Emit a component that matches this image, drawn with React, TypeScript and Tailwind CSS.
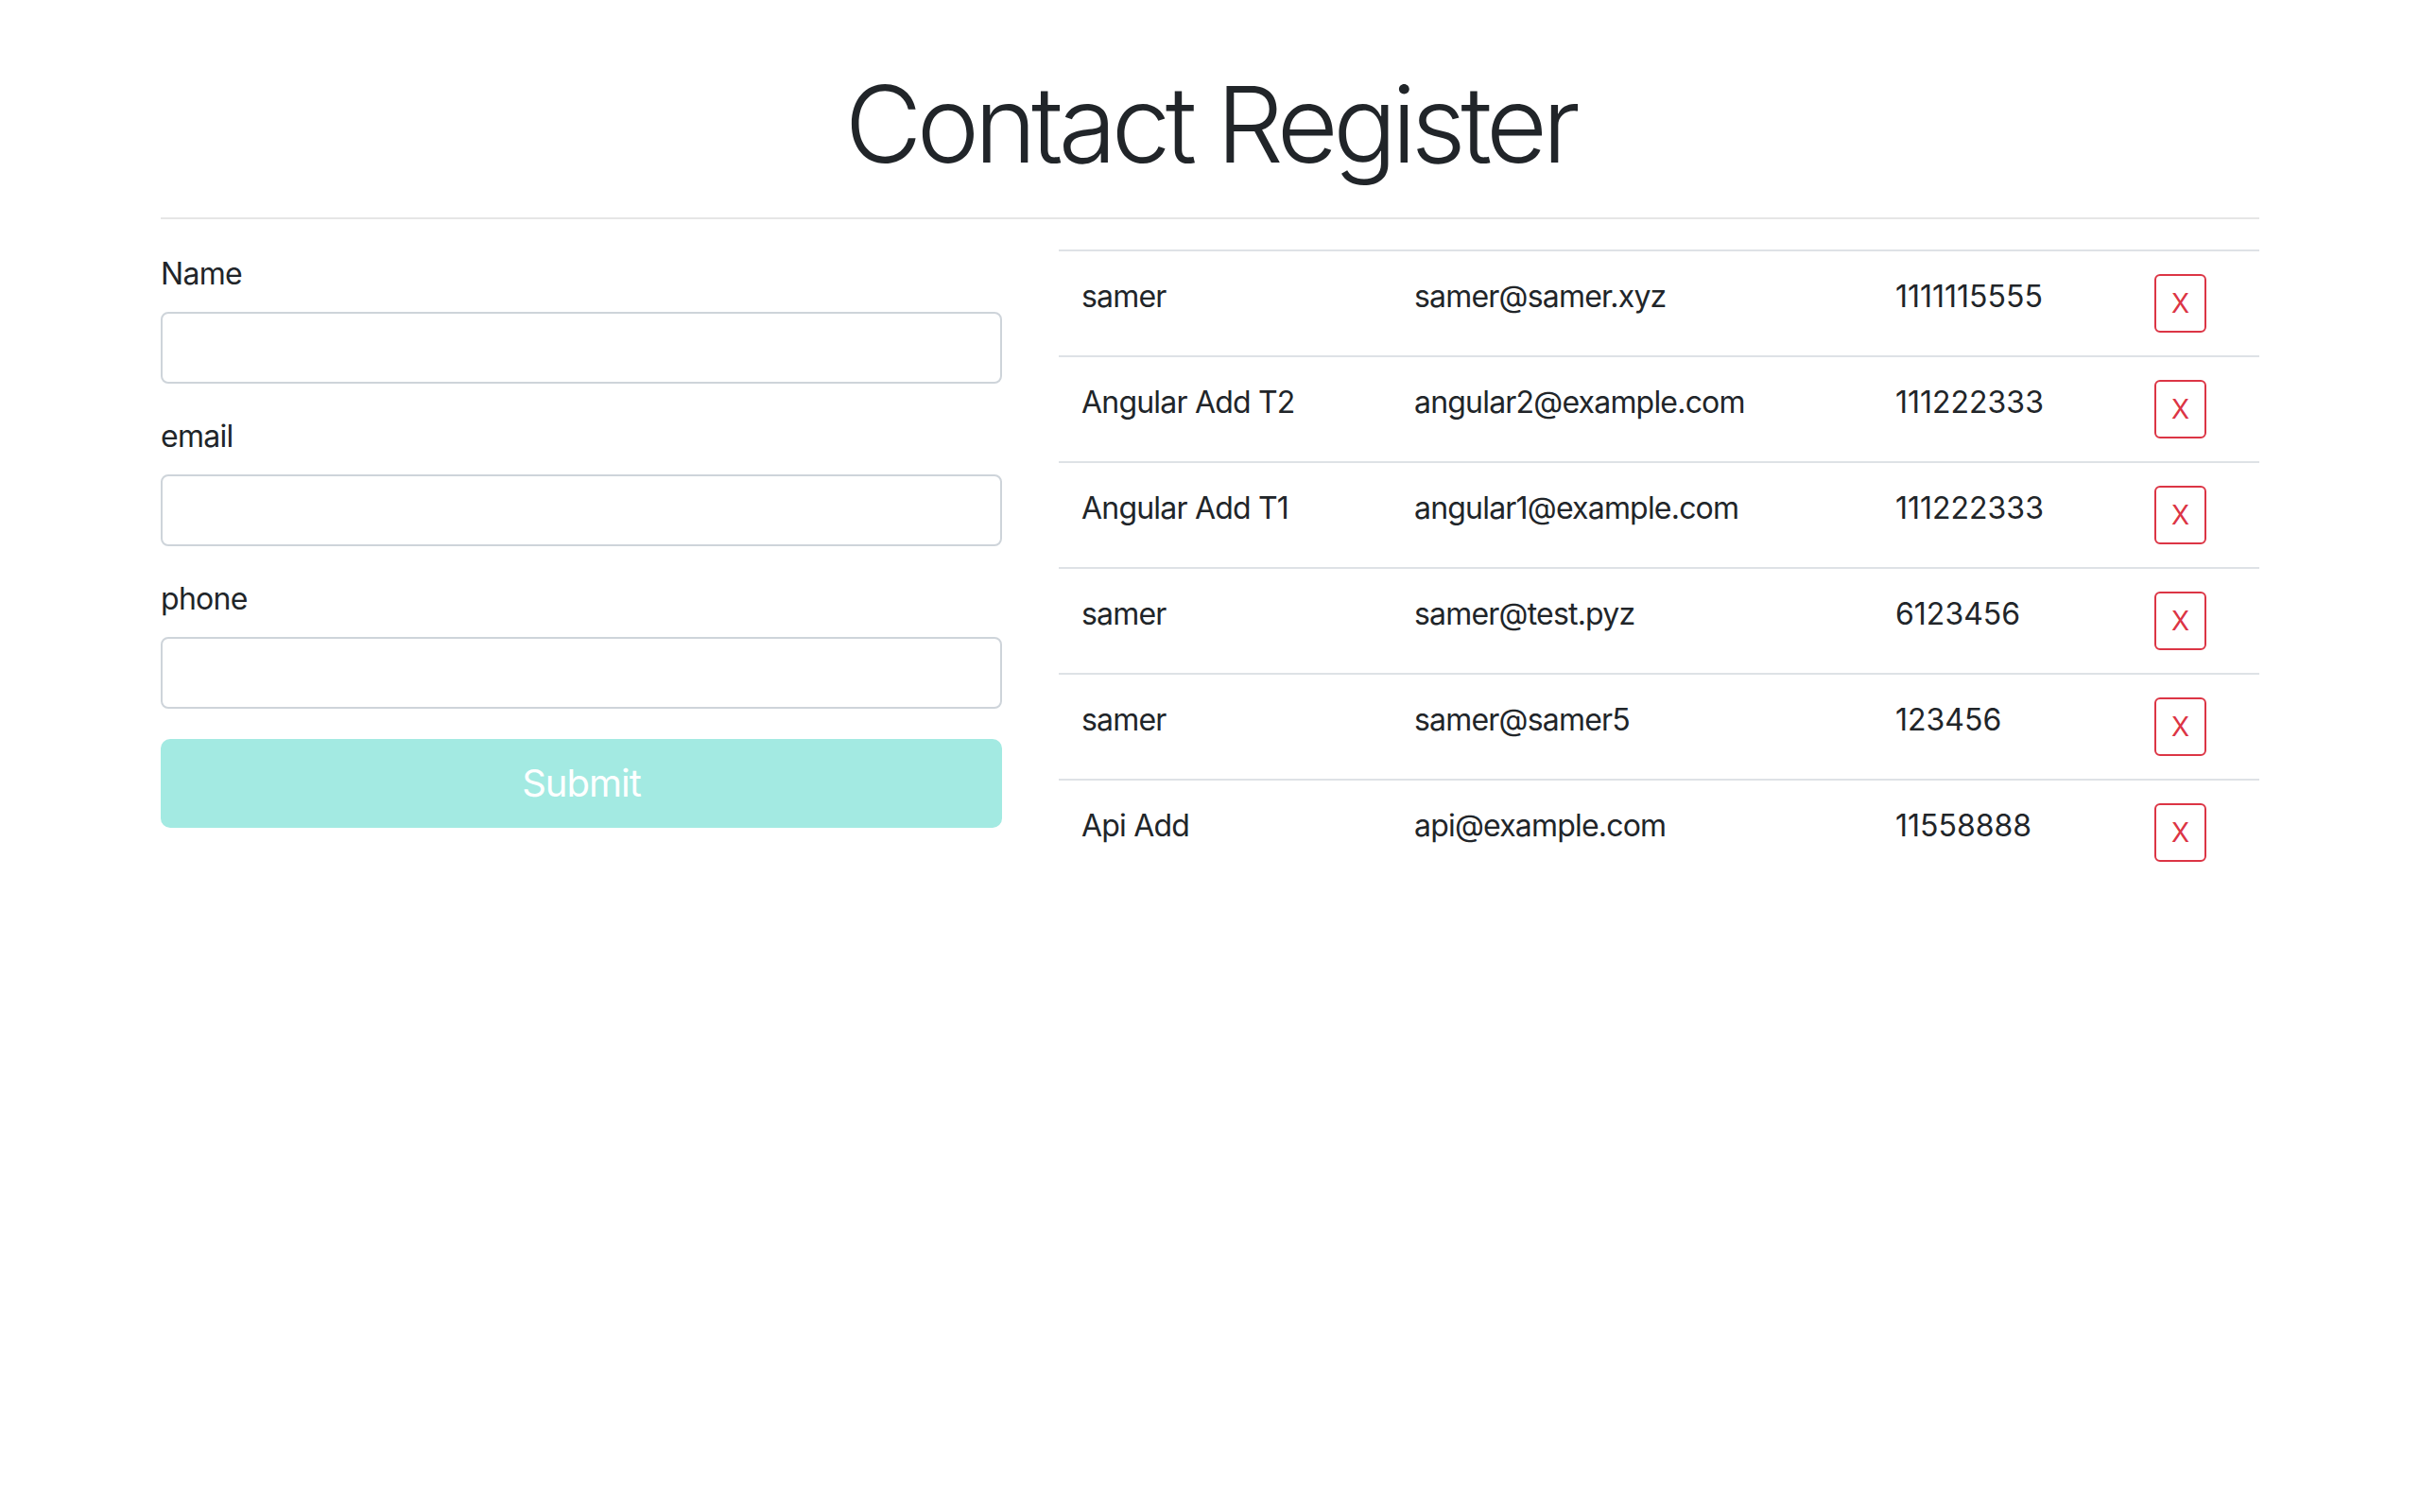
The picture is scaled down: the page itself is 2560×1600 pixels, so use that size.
const contacts = [
  { name: 'samer', email: 'samer@samer.xyz', phone: '1111115555' },
  { name: 'Angular Add T2', email: 'angular2@example.com', phone: '111222333' },
  { name: 'Angular Add T1', email: 'angular1@example.com', phone: '111222333' },
  { name: 'samer', email: 'samer@test.pyz', phone: '6123456' },
  { name: 'samer', email: 'samer@samer5', phone: '123456' },
  { name: 'Api Add', email: 'api@example.com', phone: '11558888' },
]

function Field({ label }: { label: string }) {
  return (
    <div className="mb-[32px]">
      <label className="block mb-[16px] text-[32px] leading-[48px] tracking-[-0.7px]">{label}</label>
      <input
        type="text"
        className="block w-full h-[76px] px-[24px] bg-white border-2 border-[#ced4da] rounded-[8px] text-[32px] focus:outline-none"
      />
    </div>
  )
}

export default function App() {
  return (
    <div className="min-h-screen bg-white text-[#212529] font-['Inter','Liberation_Sans',sans-serif]">
      <div className="mx-auto w-[2220px] pt-[64px]">
        <h1 className="text-center text-[112px] font-light leading-[1.2] tracking-[-5.5px]">Contact Register</h1>
        <hr className="mt-[32px] mb-[32px] border-0 border-t-2 border-[#e6e6e6]" />

        <div className="flex gap-[60px] items-start">
          <form className="w-[890px] shrink-0 pt-[2px]" onSubmit={(e) => e.preventDefault()}>
            <Field label="Name" />
            <Field label="email" />
            <Field label="phone" />
            <button
              type="submit"
              disabled
              className="block w-full h-[94px] rounded-[10px] bg-[#a3eae2] text-white text-[40px] leading-[60px] tracking-[-1px]"
            >
              Submit
            </button>
          </form>

          <table className="w-[1270px] table-fixed border-collapse">
            <colgroup>
              <col className="w-[352px]" />
              <col className="w-[509px]" />
              <col className="w-[274px]" />
              <col className="w-[135px]" />
            </colgroup>
            <tbody>
              {contacts.map((c, i) => (
                <tr key={i}>
                  <td className="border-t-2 border-[#dee2e6] p-[24px] align-top text-[32px] leading-[48px] tracking-[-0.8px]">{c.name}</td>
                  <td className="border-t-2 border-[#dee2e6] p-[24px] align-top text-[32px] leading-[48px] tracking-[-0.8px]">{c.email}</td>
                  <td className="border-t-2 border-[#dee2e6] p-[24px] align-top text-[32px] leading-[48px]">{c.phone}</td>
                  <td className="border-t-2 border-[#dee2e6] p-[24px] align-top">
                    <button className="border-2 border-[#dc3545] text-[#dc3545] rounded-[6px] text-[28px] leading-[42px] px-[16px] py-[8px]">
                      X
                    </button>
                  </td>
                </tr>
              ))}
            </tbody>
          </table>
        </div>
      </div>
    </div>
  )
}
